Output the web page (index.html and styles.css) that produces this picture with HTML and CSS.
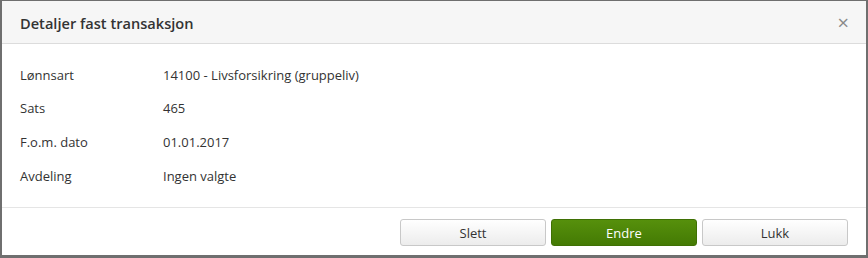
FILE: index.html
```html
<!DOCTYPE html>
<html lang="no">
    <head>
        <meta charset="UTF-8"><meta name="viewport" content="width=device-width, initial-scale=1.0"><title>Detaljer fast transaksjon</title>
        <link rel="stylesheet" href="styles.css">
    </head>
    <body>
        <div class="modal">
            <div class="modal_header">
                <h2 class="modal_title">Detaljer fast transaksjon</h2>
                <span class="modal_close">&times;</span>
            </div>
            <div class="modal_body">
                <div class="row"><span class="label">Lønnsart</span><span class="value">14100 - Livsforsikring (gruppeliv)</span></div>
                <div class="row"><span class="label">Sats</span><span class="value">465</span></div>
                <div class="row"><span class="label">F.o.m. dato</span><span class="value">01.01.2017</span></div>
                <div class="row"><span class="label">Avdeling</span><span class="value">Ingen valgte</span></div>
            </div>
            <div class="modal_footer">
                <button class="btn">Slett</button>
                <button class="btn btn_primary">Endre</button>
                <button class="btn">Lukk</button>
            </div>
        </div>
    </body>
</html>
```

FILE: styles.css
```css
body {
    margin: 0;
    background-color: #6f6f6f;
    font-family: "Open Sans", "Liberation Sans", sans-serif;
    color: #333;
}
.modal {
    margin: 1px 0 0 2px;
    width: 864px;
    height: 254px;
    background-color: #fff;
    display: flex;
    flex-direction: column;
}
.modal_header {
    display: flex;
    align-items: center;
    justify-content: space-between;
    height: 43px;
    padding: 2px 17px 0 18px;
    box-sizing: border-box;
    background-color: #f6f6f6;
    border-bottom: 1px solid #dcdcdc;
}
.modal_title {
    margin: 0;
    font-size: 14.6px;
    font-weight: 600;
    color: #333;
}
.modal_close {
    font-size: 20px;
    color: #8a8a8a;
    line-height: 1;
}
.modal_body {
    flex: 1;
    padding: 14px 18px 0;
}
.row {
    display: flex;
    height: 33.6px;
    align-items: center;
    font-size: 13px;
}
.label {
    width: 143px;
}
.modal_footer {
    display: flex;
    justify-content: flex-end;
    gap: 5px;
    padding: 11px 18px 9px;
    border-top: 1px solid #e5e5e5;
}
.btn {
    width: 146px;
    height: 27px;
    font-family: inherit;
    font-size: 13px;
    color: #333;
    background: linear-gradient(#ffffff, #ececec);
    border: 1px solid #c8c8c8;
    border-radius: 3px;
}
.btn_primary {
    color: #fff;
    background: linear-gradient(#56900c, #447a04);
    border-color: #3f7004;
}
```
